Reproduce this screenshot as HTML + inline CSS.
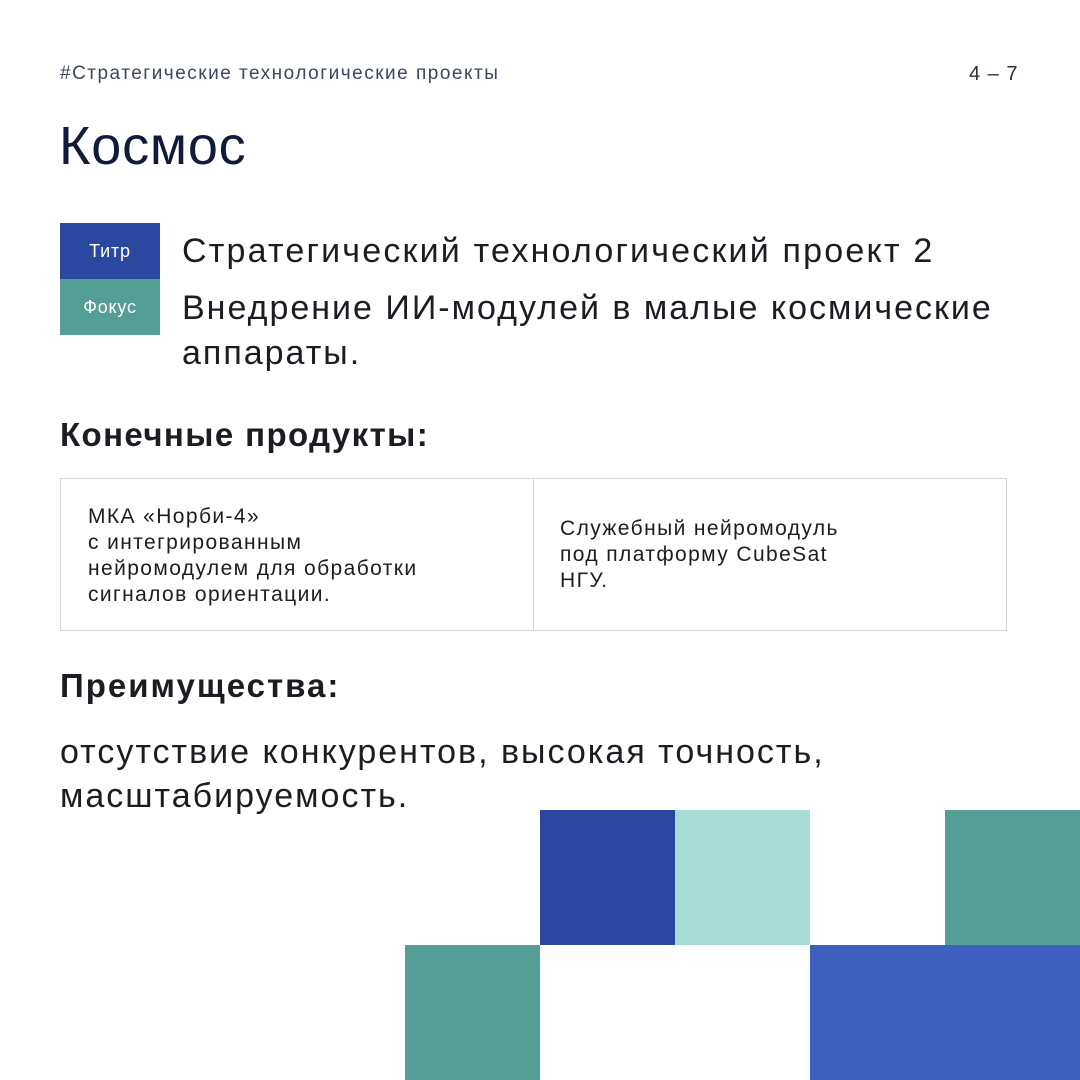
<!DOCTYPE html>
<html><head><meta charset="utf-8"><style>
*{margin:0;padding:0;box-sizing:border-box}
body{width:1080px;height:1080px;background:#fff;position:relative;overflow:hidden;font-family:"Liberation Sans","Noto Sans CJK SC",sans-serif;color:#1c1c22}
.a{position:absolute;white-space:nowrap}
.sq{position:absolute;width:135px;height:135px}
</style></head><body>
<div class="a" style="left:60px;top:63px;font-size:19px;letter-spacing:1.5px;color:#3d4560">#Стратегические технологические проекты</div>
<div class="a" style="left:969px;top:63px;font-size:20px;letter-spacing:1px;color:#2a2d3a">4 – 7</div>
<div class="a" style="left:59px;top:115px;font-size:54px;letter-spacing:0.8px;color:#111a38">Космос</div>
<div class="a" style="left:60px;top:223px;width:100px;height:56px;background:#2a48a0;color:#fff;font-size:18px;letter-spacing:0.8px;text-align:center;line-height:56px">Титр</div>
<div class="a" style="left:60px;top:279px;width:100px;height:56px;background:#549e96;color:#fff;font-size:18px;letter-spacing:0.8px;text-align:center;line-height:56px">Фокус</div>
<div class="a" style="left:182px;top:232px;font-size:34px;letter-spacing:2.2px;color:#1c1c22">Стратегический технологический проект 2</div>
<div class="a" style="left:182px;top:286px;font-size:34px;letter-spacing:2px;line-height:45px;color:#1c1c22">Внедрение ИИ-модулей в малые космические<br>аппараты.</div>
<div class="a" style="left:60px;top:416px;font-size:33px;letter-spacing:1.4px;font-weight:bold">Конечные продукты:</div>
<div class="a" style="left:60px;top:478px;width:947px;height:153px;border:1px solid #d4d4d8"></div>
<div class="a" style="left:533px;top:478px;width:1px;height:153px;background:#d4d4d8"></div>
<div class="a" style="left:88px;top:504px;font-size:21px;letter-spacing:1.4px;line-height:26px">МКА «Норби-4»<br>с интегрированным<br>нейромодулем для обработки<br>сигналов ориентации.</div>
<div class="a" style="left:560px;top:516px;font-size:21px;letter-spacing:1.4px;line-height:26px">Служебный нейромодуль<br>под платформу CubeSat<br>НГУ.</div>
<div class="a" style="left:60px;top:667px;font-size:33px;letter-spacing:2px;font-weight:bold">Преимущества:</div>
<div class="a" style="left:60px;top:730px;font-size:34px;letter-spacing:2px;line-height:44px">отсутствие конкурентов, высокая точность,<br>масштабируемость.</div>
<div class="sq" style="left:540px;top:810px;background:#2a48a0"></div>
<div class="sq" style="left:675px;top:810px;background:#a7dbd6"></div>
<div class="sq" style="left:945px;top:810px;background:#549e96"></div>
<div class="sq" style="left:405px;top:945px;background:#549e96"></div>
<div class="sq" style="left:810px;top:945px;width:270px;background:#3d5fbd"></div>
</body></html>
